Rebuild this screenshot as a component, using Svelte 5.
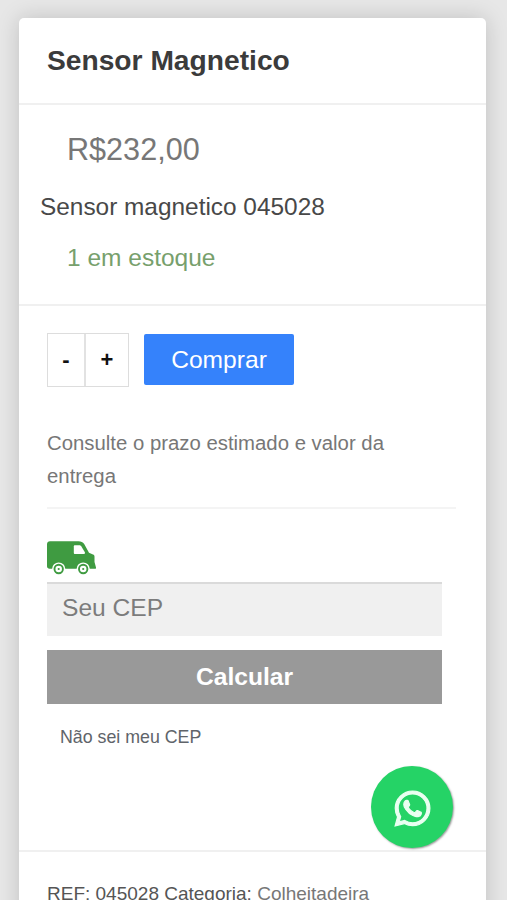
<script>
  const product = {
    name: 'Sensor Magnetico',
    price: 'R$232,00',
    summary: 'Sensor magnetico 045028',
    stock: 1,
    ref: '045028',
    category: 'Colheitadeira'
  };

  let quantity = $state(1);
  let cep = $state('');
</script>

<main class="page">
  <article class="card">
    <header class="title">
      <h1>{product.name}</h1>
    </header>

    <section class="details">
      <p class="price">{product.price}</p>
      <p class="summary">{product.summary}</p>
      <p class="stock">{product.stock} em estoque</p>
    </section>

    <section class="purchase">
      <div class="buy-row">
        <div class="quantity">
          <button type="button" onclick={() => (quantity = Math.max(1, quantity - 1))}>-</button>
          <button type="button" onclick={() => (quantity = Math.min(product.stock, quantity + 1))}>+</button>
        </div>
        <button type="button" class="buy">Comprar</button>
      </div>

      <p class="shipping-note">Consulte o prazo estimado e valor da entrega</p>

      <form class="shipping" onsubmit={(e) => e.preventDefault()}>
        <svg class="truck" viewBox="0 0 49 34" aria-hidden="true">
          <path
            fill="#3f9b41"
            d="M3 .3H31.500c2.600 0 4.300.8 5.700 2.700L42 11.800l4 1.700c1 .4 1.500 1.200 1.500 2.200V21l1.500 5.500c.2.800-.2 1.300-1 1.300H2.500C1 27.800 0 26.800 0 25.300V3.300C0 1.500 1.200.3 3 .3Z"
          />
          <path fill="#fff" d="M28 4.300h4.200c1 0 1.600.3 2.200 1.200l3.300 5.500c.7 1.200.3 2-1 2H28c-.8 0-1.200-.4-1.200-1.200V5.500c0-.8.4-1.200 1.200-1.200Z" />
          {#each [11.7, 36.2] as cx}
            <circle {cx} cy="28" r="6.600" fill="#fff" />
            <circle {cx} cy="28" r="4.200" fill="none" stroke="#3f9b41" stroke-width="1.900" />
            <circle {cx} cy="28" r="1.100" fill="#3f9b41" />
          {/each}
        </svg>
        <input type="text" placeholder="Seu CEP" bind:value={cep} />
        <button type="submit">Calcular</button>
        <span class="lookup">Não sei meu CEP</span>
      </form>
    </section>

    <footer class="meta">
      REF: {product.ref} Categoria: <span>{product.category}</span>
    </footer>
  </article>

  <button type="button" class="whatsapp" aria-label="WhatsApp">
    <svg viewBox="0 0 24 24" aria-hidden="true">
      <path
        fill="currentColor"
        d="M17.472 14.382c-.297-.149-1.758-.867-2.030-.967-.273-.099-.471-.148-.670.150-.197.297-.767.966-.940 1.164-.173.199-.347.223-.644.075-.297-.150-1.255-.463-2.390-1.475-.883-.788-1.480-1.761-1.653-2.059-.173-.297-.018-.458.130-.606.134-.133.298-.347.446-.520.149-.174.198-.298.298-.497.099-.198.050-.371-.025-.520-.075-.149-.669-1.612-.916-2.207-.242-.579-.487-.500-.669-.510-.173-.008-.371-.010-.570-.010-.198 0-.520.074-.792.372-.272.297-1.040 1.016-1.040 2.479 0 1.462 1.065 2.875 1.213 3.074.149.198 2.096 3.200 5.077 4.487.709.306 1.262.489 1.694.625.712.227 1.360.195 1.871.118.571-.085 1.758-.719 2.006-1.413.248-.694.248-1.289.173-1.413-.074-.124-.272-.198-.570-.347m-5.421 7.403h-.004a9.870 9.870 0 0 1-5.031-1.378l-.361-.214-3.741.982.998-3.648-.235-.374a9.860 9.860 0 0 1-1.510-5.260c.001-5.450 4.436-9.884 9.888-9.884 2.640 0 5.122 1.030 6.988 2.898a9.825 9.825 0 0 1 2.893 6.994c-.003 5.450-4.437 9.884-9.885 9.884m8.413-18.297A11.815 11.815 0 0 0 12.050 0C5.495 0 .160 5.335.157 11.892c0 2.096.547 4.142 1.588 5.945L.057 24l6.305-1.654a11.882 11.882 0 0 0 5.683 1.448h.005c6.554 0 11.890-5.335 11.893-11.893a11.821 11.821 0 0 0-3.480-8.413Z"
      />
    </svg>
  </button>
</main>

<style>
  :global(body) {
    margin: 0;
    background: #e7e7e7;
  }

  .page {
    box-sizing: border-box;
    height: 900px;
    padding: 18px 21px 0 19px;
    overflow: hidden;
    font-family: 'Liberation Sans', Arial, sans-serif;
    color: #484848;
  }

  h1,
  p {
    margin: 0;
  }

  button,
  input {
    box-sizing: border-box;
    margin: 0;
    border: 0;
    font: inherit;
  }

  .card {
    height: 940px;
    border-radius: 5px;
    background: #fff;
    box-shadow: 0 0 22px rgba(0, 0, 0, 0.17);
  }

  .title,
  .details,
  .purchase {
    box-sizing: border-box;
    border-bottom: 2px solid #f0f0f0;
  }

  .title {
    height: 87px;
    padding: 25px 28px 0;
  }

  h1 {
    font-size: 28.2px;
    line-height: 34px;
    color: #3b3b3b;
  }

  .details {
    height: 201px;
    padding: 26px 21px 0;
  }

  .price {
    padding-left: 27px;
    font-size: 30.6px;
    line-height: 36px;
    color: #777;
  }

  .summary {
    margin-top: 25px;
    font-size: 24.4px;
    line-height: 30px;
  }

  .stock {
    margin-top: 21px;
    padding-left: 27px;
    font-size: 24.5px;
    line-height: 30px;
    color: #77a06c;
  }

  .purchase {
    height: 546px;
    padding: 27px 30px 0 28px;
  }

  .buy-row {
    display: flex;
    align-items: flex-start;
    gap: 15px;
  }

  .quantity {
    display: flex;
    box-sizing: border-box;
    width: 82px;
    height: 54px;
    border: 1px solid #ddd;
  }

  .quantity button {
    flex: 1;
    padding: 0;
    background: #fff;
    font-size: 22px;
    font-weight: 700;
    color: #111;
  }

  .quantity button:first-child {
    flex: 0 0 38px;
    border-right: 2px solid #e2e2e2;
  }

  .buy {
    width: 150px;
    height: 51px;
    margin-top: 1px;
    padding: 0;
    border-radius: 2px;
    background: #3582fb;
    font-size: 24.6px;
    color: #fff;
  }

  .shipping-note {
    margin-top: 40px;
    padding-bottom: 14px;
    border-bottom: 2px solid #f4f4f4;
    font-size: 20.35px;
    line-height: 33px;
    color: #777;
  }

  .shipping {
    display: flex;
    flex-direction: column;
    width: 395px;
    padding-top: 32px;
  }

  .truck {
    width: 49px;
    height: 34px;
  }

  .shipping input {
    height: 54px;
    margin-top: 7px;
    padding: 0 15px 5px;
    border-top: 2px solid #dadada;
    border-radius: 0;
    background: #f0f0f0;
    font-size: 24.6px;
  }

  .shipping input::placeholder {
    color: #7c7c7c;
    opacity: 1;
  }

  .shipping button {
    height: 54px;
    margin-top: 14px;
    background: #999;
    font-size: 24.6px;
    font-weight: 700;
    color: #fff;
  }

  .lookup {
    margin: 22px 0 0 13px;
    font-size: 17.8px;
    line-height: 22px;
    color: #60646a;
  }

  .meta {
    padding: 30px 28px 0;
    font-size: 19px;
    line-height: 24px;
    color: #555;
  }

  .meta span {
    color: #777;
  }

  .whatsapp {
    position: fixed;
    right: 54px;
    bottom: 52px;
    display: grid;
    place-items: center;
    width: 82px;
    height: 82px;
    padding: 3px 0 0;
    border-radius: 50%;
    background: #25d366;
    box-shadow: 1px 1px 2px rgba(0, 0, 0, 0.4);
    color: #e9fff1;
  }

  .whatsapp svg {
    width: 35px;
    height: 35px;
    overflow: visible;
    stroke: currentColor;
    stroke-width: 0.8;
  }
</style>
